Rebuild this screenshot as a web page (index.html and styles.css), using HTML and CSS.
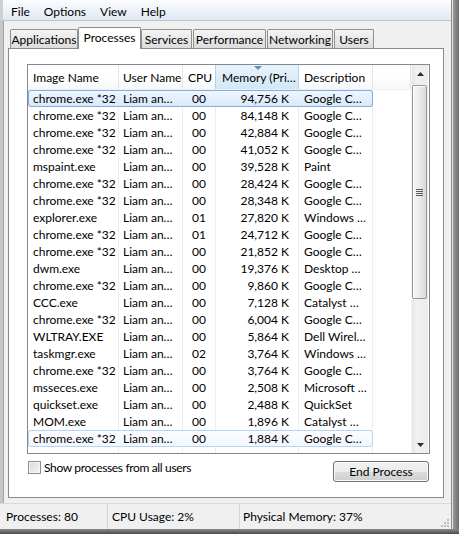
FILE: index.html
```html
<!DOCTYPE html>
<html>
<head>
<meta charset="utf-8">
<link rel="stylesheet" href="styles.css">
</head>
<body>
<div class="window">
  <div class="client">
    <div class="menubar">
      <span class="menu-item">File</span>
      <span class="menu-item">Options</span>
      <span class="menu-item">View</span>
      <span class="menu-item">Help</span>
    </div>
    <div class="main">
      <div class="tabs">
        <div class="tab t-app">Applications</div>
        <div class="tab t-proc active">Processes</div>
        <div class="tab t-serv">Services</div>
        <div class="tab t-perf">Performance</div>
        <div class="tab t-net">Networking</div>
        <div class="tab t-users">Users</div>
      </div>
      <div class="panel">
        <div class="listview">
          <div class="lv-content">
            <div class="lv-header">
              <div class="hc c1">Image Name</div>
              <div class="hc c2">User Name</div>
              <div class="hc c3">CPU</div>
              <div class="hc c4 sorted"><span class="sort-arrow"></span>Memory (Pri…</div>
              <div class="hc c5">Description</div>
              <div class="hc c6"></div>
            </div>
            <div class="lv-body">
              <div class="row selected"><div class="c c1">chrome.exe *32</div><div class="c c2">Liam an…</div><div class="c c3">00</div><div class="c c4">94,756 K</div><div class="c c5">Google C…</div></div>
              <div class="row"><div class="c c1">chrome.exe *32</div><div class="c c2">Liam an…</div><div class="c c3">00</div><div class="c c4">84,148 K</div><div class="c c5">Google C…</div></div>
              <div class="row"><div class="c c1">chrome.exe *32</div><div class="c c2">Liam an…</div><div class="c c3">00</div><div class="c c4">42,884 K</div><div class="c c5">Google C…</div></div>
              <div class="row"><div class="c c1">chrome.exe *32</div><div class="c c2">Liam an…</div><div class="c c3">00</div><div class="c c4">41,052 K</div><div class="c c5">Google C…</div></div>
              <div class="row"><div class="c c1">mspaint.exe</div><div class="c c2">Liam an…</div><div class="c c3">00</div><div class="c c4">39,528 K</div><div class="c c5">Paint</div></div>
              <div class="row"><div class="c c1">chrome.exe *32</div><div class="c c2">Liam an…</div><div class="c c3">00</div><div class="c c4">28,424 K</div><div class="c c5">Google C…</div></div>
              <div class="row"><div class="c c1">chrome.exe *32</div><div class="c c2">Liam an…</div><div class="c c3">00</div><div class="c c4">28,348 K</div><div class="c c5">Google C…</div></div>
              <div class="row"><div class="c c1">explorer.exe</div><div class="c c2">Liam an…</div><div class="c c3">01</div><div class="c c4">27,820 K</div><div class="c c5">Windows …</div></div>
              <div class="row"><div class="c c1">chrome.exe *32</div><div class="c c2">Liam an…</div><div class="c c3">01</div><div class="c c4">24,712 K</div><div class="c c5">Google C…</div></div>
              <div class="row"><div class="c c1">chrome.exe *32</div><div class="c c2">Liam an…</div><div class="c c3">00</div><div class="c c4">21,852 K</div><div class="c c5">Google C…</div></div>
              <div class="row"><div class="c c1">dwm.exe</div><div class="c c2">Liam an…</div><div class="c c3">00</div><div class="c c4">19,376 K</div><div class="c c5">Desktop …</div></div>
              <div class="row"><div class="c c1">chrome.exe *32</div><div class="c c2">Liam an…</div><div class="c c3">00</div><div class="c c4">9,860 K</div><div class="c c5">Google C…</div></div>
              <div class="row"><div class="c c1">CCC.exe</div><div class="c c2">Liam an…</div><div class="c c3">00</div><div class="c c4">7,128 K</div><div class="c c5">Catalyst …</div></div>
              <div class="row"><div class="c c1">chrome.exe *32</div><div class="c c2">Liam an…</div><div class="c c3">00</div><div class="c c4">6,004 K</div><div class="c c5">Google C…</div></div>
              <div class="row"><div class="c c1">WLTRAY.EXE</div><div class="c c2">Liam an…</div><div class="c c3">00</div><div class="c c4">5,864 K</div><div class="c c5">Dell Wirel…</div></div>
              <div class="row"><div class="c c1">taskmgr.exe</div><div class="c c2">Liam an…</div><div class="c c3">02</div><div class="c c4">3,764 K</div><div class="c c5">Windows …</div></div>
              <div class="row"><div class="c c1">chrome.exe *32</div><div class="c c2">Liam an…</div><div class="c c3">00</div><div class="c c4">3,764 K</div><div class="c c5">Google C…</div></div>
              <div class="row"><div class="c c1">msseces.exe</div><div class="c c2">Liam an…</div><div class="c c3">00</div><div class="c c4">2,508 K</div><div class="c c5">Microsoft …</div></div>
              <div class="row"><div class="c c1">quickset.exe</div><div class="c c2">Liam an…</div><div class="c c3">00</div><div class="c c4">2,488 K</div><div class="c c5">QuickSet</div></div>
              <div class="row"><div class="c c1">MOM.exe</div><div class="c c2">Liam an…</div><div class="c c3">00</div><div class="c c4">1,896 K</div><div class="c c5">Catalyst …</div></div>
              <div class="row focused"><div class="c c1">chrome.exe *32</div><div class="c c2">Liam an…</div><div class="c c3">00</div><div class="c c4">1,884 K</div><div class="c c5">Google C…</div></div>
              <div class="row"><div class="c c1"></div><div class="c c2"></div><div class="c c3"></div><div class="c c4"></div><div class="c c5"></div></div>
            </div>
          </div>
          <div class="scrollbar">
            <div class="sb-btn"><svg width="7" height="4" viewBox="0 0 7 4"><path d="M3.5 0 L7 4 L0 4 Z" fill="#2b2b2b"/></svg></div>
            <div class="sb-track">
              <div class="sb-thumb">
                <svg width="7" height="8" viewBox="0 0 7 8"><path d="M0 0.5h7M0 2.5h7M0 4.5h7M0 6.5h7" stroke="#5a5a5a" stroke-width="1"/></svg>
              </div>
            </div>
            <div class="sb-btn"><svg width="7" height="4" viewBox="0 0 7 4"><path d="M0 0 L7 0 L3.5 4 Z" fill="#2b2b2b"/></svg></div>
          </div>
        </div>
        <div class="panel-footer">
          <label class="check"><span class="box"></span><span class="check-label">Show processes from all users</span></label>
          <button class="btn">End Process</button>
        </div>
      </div>
    </div>
    <div class="statusbar">
      <div class="sb-seg s1">Processes: 80</div>
      <div class="sb-seg s2">CPU Usage: 2%</div>
      <div class="sb-seg s3">Physical Memory: 37%
        <svg class="grip" width="8" height="8" viewBox="0 0 8 8">
          <rect x="6" y="0" width="2" height="2" fill="#bcbcbc"/>
          <rect x="3" y="3" width="2" height="2" fill="#bcbcbc"/>
          <rect x="6" y="3" width="2" height="2" fill="#bcbcbc"/>
          <rect x="0" y="6" width="2" height="2" fill="#bcbcbc"/>
          <rect x="3" y="6" width="2" height="2" fill="#bcbcbc"/>
          <rect x="6" y="6" width="2" height="2" fill="#bcbcbc"/>
        </svg>
      </div>
    </div>
  </div>
  <div class="rframe"></div>
</div>
<div class="bframe"></div>
</body>
</html>
```

FILE: styles.css
```css
* { box-sizing: border-box; }

body {
  margin: 0;
  width: 459px;
  height: 534px;
  overflow: hidden;
  font-family: Lato, "Open Sans", sans-serif;
  font-size: 12px;
  color: #000;
  background: #f0f0f0;
}

.window {
  display: flex;
  height: 529px;
}

.client {
  width: 452px;
  display: flex;
  flex-direction: column;
  border-right: 1px solid #8a8a8a;
  background: #f0f0f0;
}

.rframe {
  width: 7px;
  background: linear-gradient(to right, #e2e2e2 0 1px, #9a9a9a 1px, #6c6c6c);
}

.bframe {
  height: 5px;
  background: linear-gradient(to bottom, #8c8c8c, #4a4a4a);
}

/* menu */
.menubar {
  height: 21px;
  display: flex;
  align-items: flex-start;
  padding: 3px 0 0 1px;
  background: linear-gradient(to bottom, #fbfcfe, #eef3fa 50%, #dfe8f4);
  border-bottom: 1px solid #b9c3d1;
  border-left: 3px solid #cfcfcf;
}

.menu-item {
  padding: 0 7px;
  line-height: 17px;
}

/* main */
.main {
  flex: 1;
  border-left: 3px solid #c6c6c6;
  box-shadow: inset 1px 0 0 #a3a3a3;
  padding: 6px 7px 0 5px;
  display: flex;
  flex-direction: column;
}

.tabs {
  display: flex;
  align-items: flex-end;
  padding-left: 2px;
  height: 22px;
  position: relative;
  z-index: 1;
  margin-bottom: -1px;
}

.tab {
  height: 19px;
  margin-bottom: 1px;
  border: 1px solid #8e8f8f;
  border-bottom: none;
  border-radius: 2px 2px 0 0;
  background: linear-gradient(to bottom, #f4f4f4, #e8e8e8 50%, #dcdcdc);
  text-align: center;
  line-height: 19px;
  white-space: nowrap;
}

.tab.active {
  height: 22px;
  margin-bottom: 0;
  background: #fff;
  border-color: #898c95;
  line-height: 19px;
}

.t-app { width: 68px; }
.t-proc { width: 63px; }
.t-serv { width: 51px; }
.t-perf { width: 73px; margin-left: 1px; }
.t-net { width: 66px; margin-left: 1px; }
.t-users { width: 40px; margin-left: 1px; }

.panel {
  height: 450px;
  background: #fff;
  border: 1px solid #898c95;
  display: flex;
  flex-direction: column;
}

/* list view */
.listview {
  margin: 15px 13px 0 18px;
  height: 390px;
  border: 1px solid #828790;
  display: flex;
  overflow: hidden;
}

.lv-content {
  width: 383px;
  overflow: hidden;
}

.lv-header {
  display: flex;
  height: 25px;
  background: linear-gradient(to bottom, #ffffff, #ffffff 50%, #f6f7f9);
  border-bottom: 1px solid #eef0f3;
}

.hc {
  flex: none;
  border-right: 1px solid #e1e4e9;
  line-height: 25px;
  padding-left: 5px;
  white-space: nowrap;
  overflow: hidden;
  position: relative;
}

.hc.sorted {
  background: linear-gradient(to bottom, #e6f3fb, #dcedf8 50%, #d2e7f5);
  border-left: 1px solid #b5d3ea;
  border-right: 1px solid #b5d3ea;
  margin-left: -1px;
  padding-left: 6px;
}

.sort-arrow {
  position: absolute;
  left: 38px;
  top: 1px;
  width: 0;
  height: 0;
  border-left: 4px solid transparent;
  border-right: 4px solid transparent;
  border-top: 4px solid #5f8fba;
}

.c1 { width: 91px; }
.c2 { width: 64px; }
.c3 { width: 33px; }
.c4 { width: 83px; }
.c5 { width: 74px; }
.c6 { width: 38px; }

.hc.c2 { padding-left: 4px; }
.hc.c3 { padding-left: 5px; }
.hc.c4.sorted { width: 84px; }

.row {
  display: flex;
  height: 17px;
  width: 345px;
  line-height: 17px;
  position: relative;
}

.row.selected {
  background: linear-gradient(to bottom, #f1f7fe, #e3effc 50%, #d7e8fb);
  box-shadow: inset 0 0 0 1px #84acdd;
  border-radius: 3px;
}

.row.focused {
  background: linear-gradient(to bottom, #fbfdff, #f2f7fe);
  box-shadow: inset 0 0 0 1px #b9d4f2;
  border-radius: 3px;
}

.c {
  flex: none;
  border-right: 1px solid #ebeff5;
  white-space: nowrap;
  overflow: hidden;
}

.row.selected .c, .row.focused .c { border-right-color: transparent; }

.c.c1 { padding-left: 5px; }
.c.c2 { padding-left: 4px; }
.c.c3 { padding-left: 9px; }
.c.c4 { text-align: right; padding-right: 9px; }
.c.c5 { padding-left: 5px; }

/* scrollbar */
.scrollbar {
  width: 17px;
  display: flex;
  flex-direction: column;
  background: linear-gradient(to right, #e6e6e6, #f1f1f1 30%, #ececec);
  border-left: 1px solid #f4f4f4;
}

.sb-btn {
  height: 17px;
  display: flex;
  align-items: center;
  justify-content: center;
}

.sb-track {
  flex: 1;
  padding-top: 3px;
}

.sb-thumb {
  margin: 0 1px 0 0;
  height: 214px;
  border: 1px solid #979797;
  border-radius: 2px;
  background: linear-gradient(to right, #f6f6f6, #ececec 45%, #d8d8dc);
  box-shadow: inset 1px 1px 0 #ffffff;
  display: flex;
  align-items: center;
  justify-content: center;
  padding-top: 2px;
}

/* footer */
.panel-footer {
  display: flex;
  justify-content: space-between;
  align-items: flex-start;
  padding: 7px 14px 0 19px;
}

.check {
  display: flex;
  align-items: center;
  height: 13px;
  gap: 3px;
  line-height: 13px;
}

.check-label {
  letter-spacing: -0.35px;
}

.box {
  width: 13px;
  height: 13px;
  border: 1px solid #8e8f8f;
  background: linear-gradient(135deg, #d8d8d8, #f6f6f6);
  box-shadow: inset 0 0 0 1px #f4f4f4;
}

.btn {
  width: 96px;
  height: 21px;
  border: 1px solid #707070;
  border-radius: 3px;
  background: linear-gradient(to bottom, #f2f2f2, #ebebeb 50%, #dddddd 51%, #cfcfcf);
  box-shadow: inset 0 0 0 1px #fbfbfb;
  font-family: Lato, "Open Sans", sans-serif;
  font-size: 12px;
  color: #000;
  padding: 0;
}

/* status bar */
.statusbar {
  height: 26px;
  display: flex;
  border-top: 1px solid #dadada;
  background: #f0f0f0;
}

.sb-seg {
  line-height: 25px;
  padding-left: 6px;
  white-space: nowrap;
}

.s1 { width: 108px; border-right: 1px solid #d5d5d5; }
.s2 { width: 132px; border-right: 1px solid #d5d5d5; padding-left: 4px; }
.s3 { flex: 1; padding-left: 3px; position: relative; }

.grip {
  position: absolute;
  right: 2px;
  bottom: 2px;
}
```
